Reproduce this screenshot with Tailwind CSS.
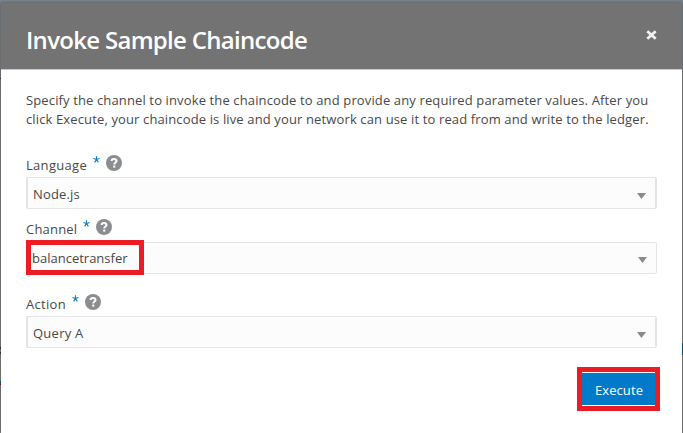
<!DOCTYPE html>
<html lang="en">
<head>
<meta charset="utf-8">
<title>Invoke Sample Chaincode</title>
<script src="https://cdn.jsdelivr.net/npm/@tailwindcss/browser@4"></script>
</head>
<body class="relative h-[433px] w-[683px] overflow-hidden bg-[#808080] bg-linear-to-b from-[#79838a] from-0% to-[#808080] to-25% pt-[3px] pl-px font-['Open_Sans','Noto_Sans',sans-serif] text-[13px] text-[#484848]">
<svg class="hidden">
  <symbol id="help" viewBox="0 0 16 16"><circle cx="8" cy="8" r="8" fill="#8b8e90"/><path d="M5.6 6.1C5.6 4.7 6.6 3.9 8 3.9s2.5.8 2.5 2c0 1.7-2.2 1.6-2.2 3.5" fill="none" stroke="#fff" stroke-width="2"/><path d="M7.2 10.6h2.1v2H7.2z" fill="#fff"/></symbol>
  <symbol id="star" viewBox="0 0 7 7"><path d="M3.5 3.6V.2M3.5 3.6L.4 2.6M3.5 3.6l3.1-1M3.5 3.6L1.6 6.4M3.5 3.6l1.9 2.8" stroke="#1478b8" stroke-width="1.1"/></symbol>
  <symbol id="arrow" viewBox="0 0 9 6"><path d="M0 0h9L4.5 6z" fill="#878b8d"/></symbol>
</svg>
<main class="flex h-[430px] w-[681px] flex-col bg-white shadow-[0_0_3px_rgba(0,0,0,0.4)]">
  <header class="flex h-[67px] shrink-0 items-start justify-between border-b border-[#c9c9c9] bg-[#737373] pr-[25px] pl-[25px]">
    <h1 class="mt-[20px] text-[24px] leading-[33px] font-semibold tracking-[-0.7px] whitespace-nowrap text-white">Invoke Sample Chaincode</h1>
    <svg class="mt-[27px] h-[10px] w-[11px]" viewBox="0 0 11 10"><path d="M1.3 1.2l8.4 7.6M9.7 1.2L1.3 8.8" stroke="#f1f1f1" stroke-width="2.8"/></svg>
  </header>
  <section class="flex flex-col pr-[25px] pl-[25px]">
    <p class="mt-[21px] h-[38px] leading-[19px] tracking-[0.13px] whitespace-nowrap">Specify the channel to invoke the chaincode to and provide any required parameter values. After you<br>click Execute, your chaincode is live and your network can use it to read from and write to the ledger.</p>

    <div class="mt-[25px] flex h-[23px] items-start">
      <label class="mt-[2px] w-[67px] leading-[18px] tracking-[0.3px]">Language</label><svg class="mt-[2px] mr-[6px] size-[7px]"><use href="#star"/></svg><svg class="mt-px size-[16px]"><use href="#help"/></svg>
    </div>
    <div class="flex h-[32px] w-[631px] items-center justify-between rounded-[2px] border border-x-2 border-[#e4e4e4] bg-[#fcfcfc] pr-[9px] pl-[5px]"><span class="mt-[3px] tracking-[0.15px]">Node.js</span><svg class="mt-[5px] h-[6px] w-[9px]"><use href="#arrow"/></svg></div>

    <div class="mt-[9px] flex h-[24px] items-start">
      <label class="mt-[2px] w-[57px] leading-[18px] tracking-[0.2px]">Channel</label><svg class="mt-[2px] mr-[6px] size-[7px]"><use href="#star"/></svg><svg class="mt-px size-[16px]"><use href="#help"/></svg>
    </div>
    <div class="relative flex h-[32px] w-[631px] items-center justify-between rounded-[2px] border border-[#e4e4e4] bg-[#fcfcfc] pr-[9px] pl-[5px]"><span class="relative z-10 mt-[2px]">balancetransfer</span><svg class="mt-[3px] h-[6px] w-[9px]"><use href="#arrow"/></svg>
      <div class="absolute top-[-3px] left-[-1px] h-[35px] w-[118px] border-[5px] border-[#ed1c24] bg-[#fcfcfc]"></div>
    </div>

    <div class="mt-[19px] flex h-[23px] items-start">
      <label class="mt-[2px] w-[46px] leading-[18px] tracking-[0.3px]">Action</label><svg class="mt-[2px] mr-[6px] size-[7px]"><use href="#star"/></svg><svg class="mt-px size-[16px]"><use href="#help"/></svg>
    </div>
    <div class="flex h-[32px] w-[631px] items-center justify-between rounded-[2px] border border-x-2 border-[#e4e4e4] bg-[#fcfcfc] pr-[9px] pl-[5px]"><span class="mt-[3px] tracking-[0.25px]">Query A</span><svg class="mt-[5px] h-[6px] w-[9px]"><use href="#arrow"/></svg></div>

    <div class="mt-[19px] mr-[-3px] h-[44px] w-[83px] self-end border-[5px] border-[#ed1c24] bg-white py-px">
      <button class="flex h-[32px] w-[73px] items-center justify-center bg-[#007ac9] pt-[3px] pl-px tracking-[0.1px] text-white">Execute</button>
    </div>
  </section>
</main>
<!-- Slivers of the dimmed page behind the dialog -->
<div class="absolute top-[343px] left-[682px] h-[12px] w-px bg-[#075078]"></div>
<div class="absolute top-[381px] left-0 h-[3px] w-px bg-[#0b5673]"></div>
<div class="absolute top-[384px] left-0 h-px w-px bg-[#7a1418]"></div>
<div class="absolute top-[347px] left-0 h-[7px] w-px border-y-2 border-[#303030]"></div>
<div class="absolute top-[78px] left-0 h-px w-px bg-[#27305a]"></div>
</body>
</html>
